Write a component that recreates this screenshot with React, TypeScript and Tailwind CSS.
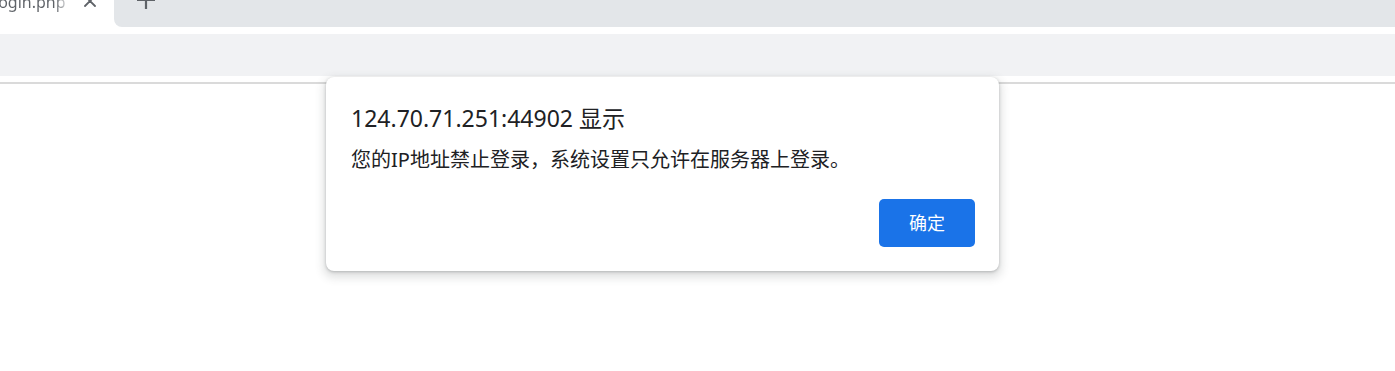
import React from "react";

export default function App() {
  const font = { fontFamily: '"Noto Sans", "Noto Sans CJK SC", sans-serif' };
  return (
    <div className="relative w-full h-[371px] overflow-hidden bg-white" style={font}>
      {/* tab strip */}
      <div className="flex h-[28px] bg-white">
        <div className="relative w-[114px] h-full bg-white overflow-hidden">
          <div className="absolute left-[-6px] top-[-8px] flex items-center text-[16px] leading-[20px] text-[#5f6368] whitespace-nowrap">
            <span className="bg-gradient-to-r from-[#5f6368] from-[80%] to-transparent bg-clip-text text-transparent pr-1">login.php</span>
          </div>
          <svg className="absolute left-[83px] top-[-6px]" width="14" height="14" viewBox="0 0 14 14">
            <path d="M2 2 L12 12 M12 2 L2 12" stroke="#5f6368" strokeWidth="1.8" strokeLinecap="round" />
          </svg>
        </div>
        <div className="flex-1 h-[27px] bg-[#e3e6e9] rounded-bl-[8px] relative">
          <svg className="absolute left-[22px] top-[-10px]" width="20" height="20" viewBox="0 0 20 20">
            <path d="M10 1 V19 M1 10 H19" stroke="#5f6368" strokeWidth="2.2" />
          </svg>
        </div>
      </div>
      <div className="h-[6px] bg-white" />
      <div className="h-[42px] bg-[#f1f2f4]" />
      <div className="h-[6px] bg-white" />
      <div className="h-[2px] bg-[#dadada]" />

      {/* dialog overlay */}
      <div className="absolute left-[326px] top-[77px] w-[673px] h-[194px] bg-white rounded-[8px] shadow-[0_1px_3px_0_rgba(60,64,67,0.3),0_4px_8px_3px_rgba(60,64,67,0.15)] flex flex-col pl-[25px] pt-[27px] pb-[24px] pr-[24px]">
        <div className="text-[23px] leading-[29px] text-[#202124]">124.70.71.251:44902 显示</div>
        <div className="mt-[14px] text-[20px] leading-[26px] text-[#202124]">
          您的IP地址禁止登录，系统设置只允许在服务器上登录。
        </div>
        <div className="mt-auto flex justify-end">
          <button className="w-[96px] h-[48px] rounded-[5px] bg-[#1a73e8] text-white text-[18px] leading-none">确定</button>
        </div>
      </div>
    </div>
  );
}
